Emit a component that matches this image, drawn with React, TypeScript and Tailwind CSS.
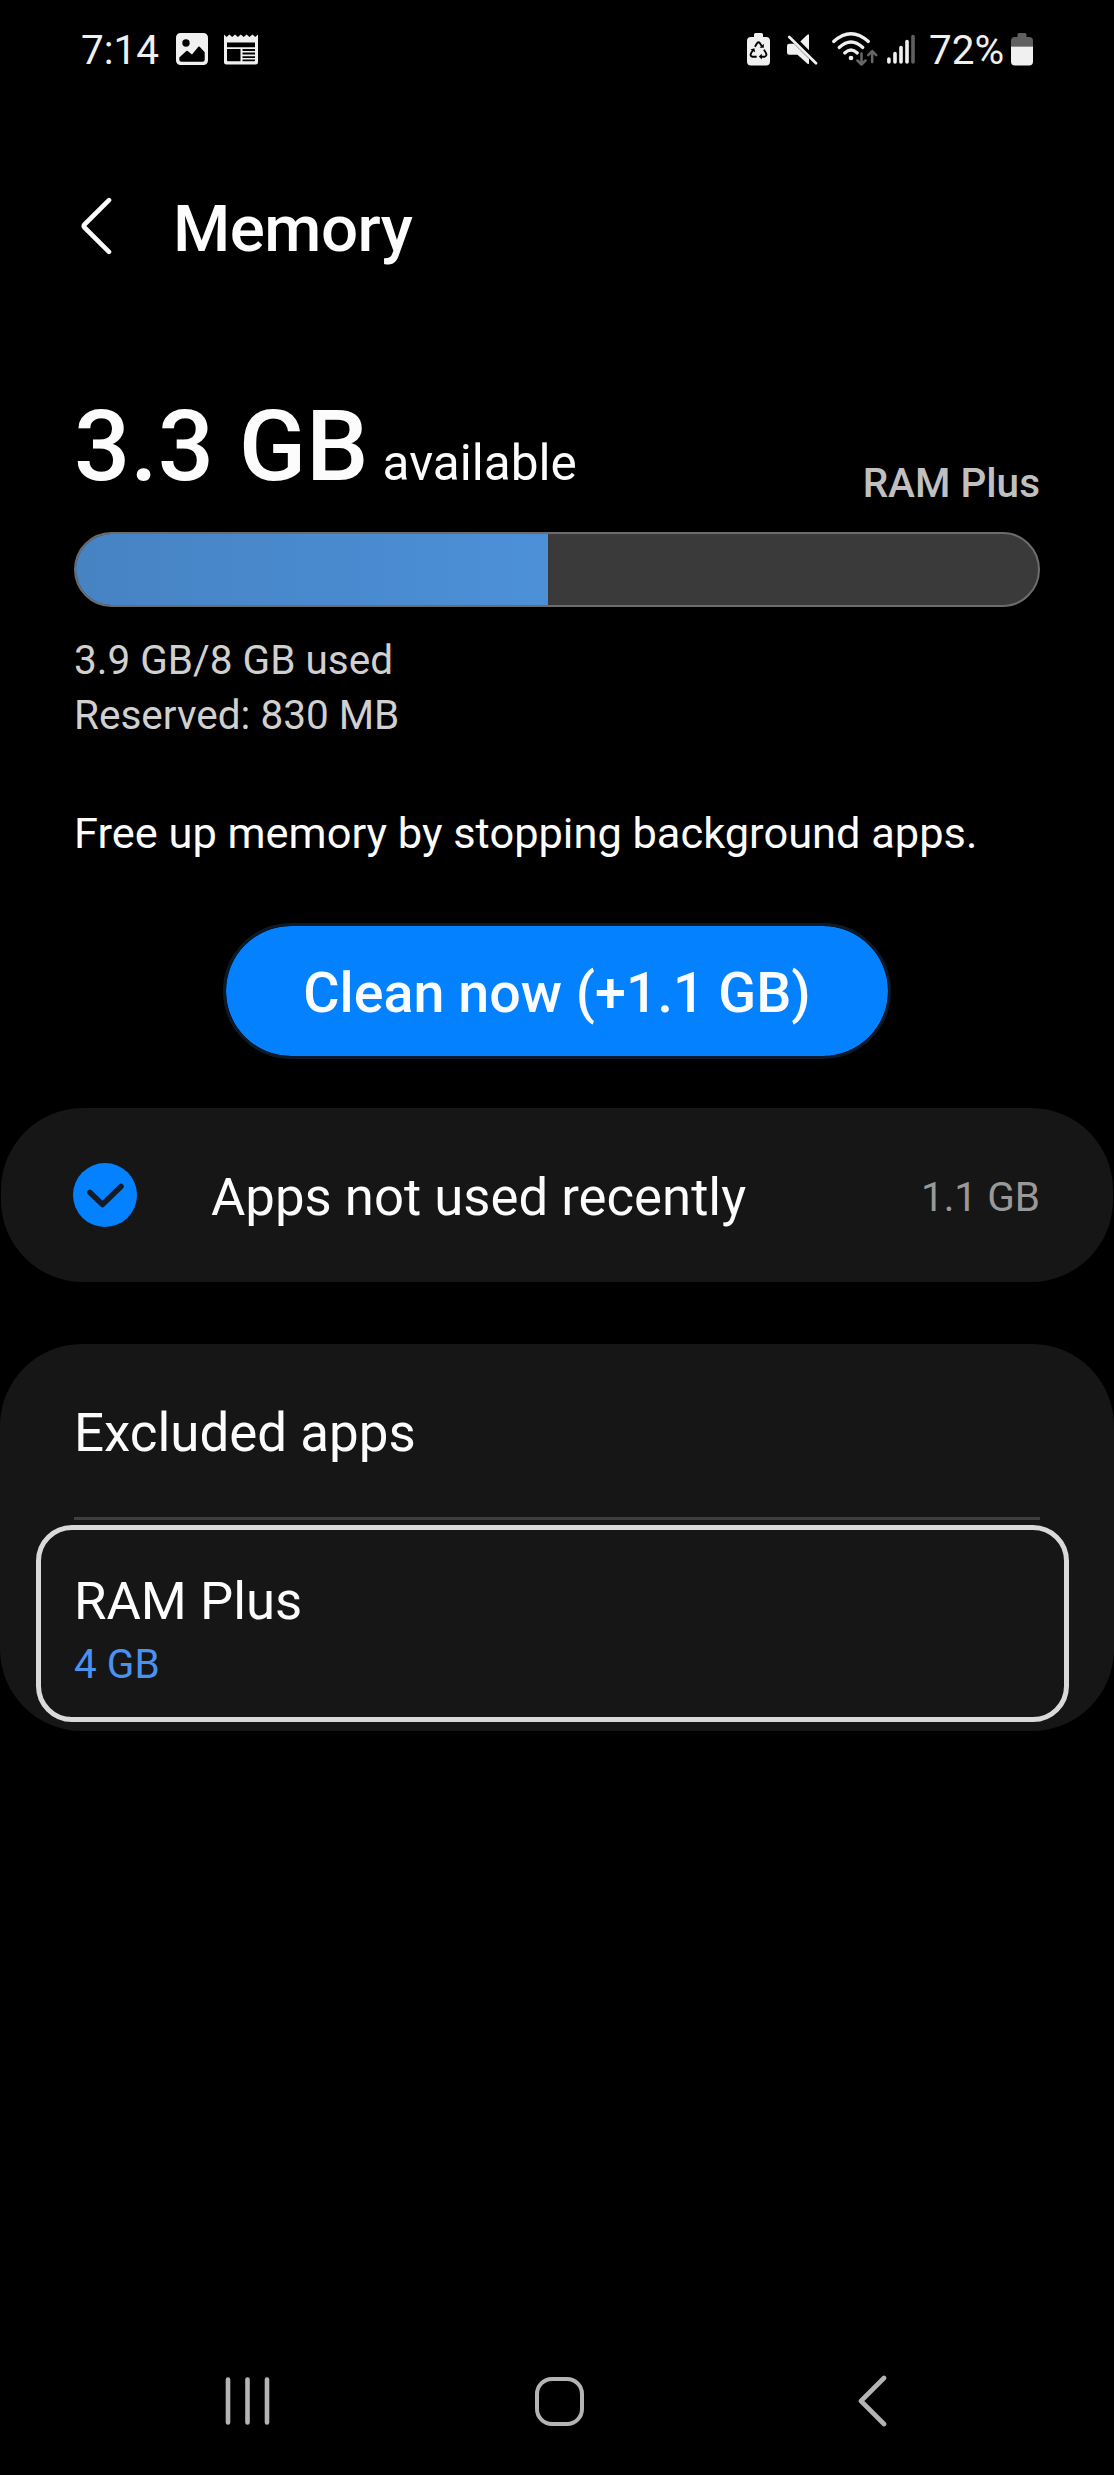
import React from "react";

function PictureIcon() {
  return (
    <svg width="32" height="32" viewBox="0 0 32 32">
      <path
        fill="#f0f0f0"
        fillRule="evenodd"
        d="M4.5 0h23A4.5 4.5 0 0 1 32 4.5v23a4.5 4.5 0 0 1-4.5 4.5h-23A4.5 4.5 0 0 1 0 27.500v-23A4.500 4.500 0 0 1 4.500 0ZM10 6.300a3.700 3.700 0 1 0 0 7.400a3.700 3.700 0 0 0 0-7.400ZM3.300 24.500v2.300q0 2 2 2h21.400q2 0 2-2V19.200l-5-5.400q-.7-.7-1.400 0l-6.300 7.600-4.300-3.500q-.7-.5-1.400.1Z"
      />
    </svg>
  );
}

function NewsIcon() {
  return (
    <svg width="34" height="31" viewBox="0 0 34 31">
      <path
        fill="#f0f0f0"
        fillRule="evenodd"
        d="M0 .5L2.600 3 5.400.5 8.200 3 11 .5 13.900 3 16.800.5 19.700 3 22.600.5 25.500 3 28.500.5 31.300 3 34 .5V28q0 2.500-2.500 2.500h-29Q0 30.500 0 28ZM3 8.500v4.700h28V8.500ZM3 15v11.500q0 .8.800.8H16.500V15ZM18.500 15v2H31v-2ZM18.500 18.600v2H31v-2ZM18.500 22.200v1.800H31v-1.800ZM18.500 25.600v1.700h11.700q.8 0 .8-.8v-.9Z"
      />
    </svg>
  );
}

function RecycleBatteryIcon() {
  return (
    <svg width="23" height="33" viewBox="0 0 23 33">
      <path fill="#f0f0f0" d="M7 1.500Q7 0 8.500 0h6Q16 0 16 1.500V4h3q4 0 4 4v20.500q0 4-4 4H4q-4 0-4-4V8q0-4 4-4h3Z" />
      <g fill="none" stroke="#000" strokeWidth="1.900">
        <path d="M7.900 13.700l2.300-3.600q1.300-1.600 2.600 0l2 3.200" />
        <path d="M17 16.600l2 3.500q1.200 3-1.500 3.600h-4" />
        <path d="M9.700 23.700H5.400q-2.800-.6-1.300-3.600l2-3.200" />
      </g>
      <path d="M16.800 10.800v4h-4.200ZM14.800 20.800v5.600l-3-2.800ZM3.400 16.500l4-1.200.8 3.900Z" />
    </svg>
  );
}

function MuteIcon() {
  return (
    <svg width="31" height="31" viewBox="0 0 31 31" fill="#f0f0f0">
      <path d="M22 .6V16.200L13.300 7.600 20.300.8Q22-.4 22 .6Z" />
      <path d="M0 12q0-2.300 2.300-2.300H7L22 24.700v4.500q0 1.400-1.500.6L10.500 20.800H2.300Q0 20.800 0 18.500Z" />
      <path d="M2.300 3L29 29.200" stroke="#f0f0f0" strokeWidth="2.700" strokeLinecap="round" />
    </svg>
  );
}

function WifiIcon() {
  return (
    <svg width="46" height="34" viewBox="0 0 46 34" fill="none">
      <g stroke="#f0f0f0" strokeWidth="3.200" strokeLinecap="round">
        <path d="M1.700 9.500Q19 -6 36.300 9.500" />
        <path d="M7.200 15.500Q19 4.500 30.800 15.500" />
        <path d="M12.700 21Q19 15 25.300 21" />
      </g>
      <circle cx="19" cy="26" r="2.300" fill="#f0f0f0" />
      <g stroke="#666" strokeWidth="2.500" strokeLinecap="round" strokeLinejoin="round">
        <path d="M29.500 21.500V32M25.500 28.500l4 4 4-4" />
        <path d="M40.200 30V19.500M36.200 23.200l4-4 4 4" />
      </g>
    </svg>
  );
}

function SignalIcon() {
  return (
    <svg width="28" height="31" viewBox="0 0 28 31" strokeWidth="3.600" strokeLinecap="round">
      <path stroke="#f0f0f0" d="M1.900 25v3M8 19.500V28M14 13.500V28M20 7.500V28" />
      <path stroke="#606060" d="M26 2.500V28" />
    </svg>
  );
}

function BatteryIcon() {
  return (
    <svg width="22" height="33" viewBox="0 0 22 33">
      <path fill="#606060" d="M6.500 1.500Q6.500 0 8 0h6q1.500 0 1.500 1.500V4H18q4 0 4 4v5.500H0V8q0-4 4-4h2.500Z" />
      <path fill="#f0f0f0" d="M0 13.500h22v15q0 4-4 4H4q-4 0-4-4Z" />
    </svg>
  );
}

function StatusBar() {
  return (
    <div className="flex h-[98px] shrink-0 items-center pl-[81px] pr-[81px] text-[40.500px] leading-none text-[#f0f0f0]">
      <span className="w-[95px] pt-[2px]">7:14</span>
      <PictureIcon />
      <div className="ml-4">
        <NewsIcon />
      </div>
      <div className="ml-auto flex items-center">
        <RecycleBatteryIcon />
        <div className="ml-[17px]">
          <MuteIcon />
        </div>
        <div className="ml-[14px]">
          <WifiIcon />
        </div>
        <div className="ml-[9px]">
          <SignalIcon />
        </div>
        <span className="ml-[14px] w-[82px] whitespace-nowrap pt-[2px]">72%</span>
        <BatteryIcon />
      </div>
    </div>
  );
}

function Header() {
  return (
    <header className="flex h-[260px] shrink-0 items-center pl-[80px]">
      <svg className="mb-[5px]" width="32" height="58" viewBox="0 0 32 58" fill="none" stroke="#fcfcfc" strokeWidth="4.600" strokeLinecap="round" strokeLinejoin="round">
        <path d="M29 3.200L4.500 27.500q-1.500 1.500 0 3L29 54.800" />
      </svg>
      <h1 className="ml-[61px] pt-[2px] text-[65.500px] font-medium leading-none tracking-[-0.5px] text-[#fcfcfc]">Memory</h1>
    </header>
  );
}

function MemoryUsage() {
  return (
    <section className="flex flex-col px-[74px]">
      <div className="flex h-[174px] items-end justify-between">
        <div className="mb-[19px] flex items-baseline whitespace-nowrap leading-[100px] text-[#fcfcfc]">
          <span className="text-[99px] font-medium">3.3 GB</span>
          <span className="ml-[14px] text-[49.500px]">available</span>
        </div>
        <span className="mb-[24px] text-[40.500px] font-medium leading-[50px] text-[#c0c0c0]">RAM Plus</span>
      </div>
      <div className="h-[75px] overflow-hidden rounded-full border-2 border-[#6c6c6c] bg-[#3a3a3a]">
        <div className="h-full w-[472px] bg-linear-to-r from-[#4683c3] to-[#4c90d8]" />
      </div>
      <p className="mt-[26px] text-[40.500px] leading-[55px] text-[#d0d0d0]">
        3.9 GB/8 GB used
        <br />
        Reserved: 830 MB
      </p>
      <p className="mt-[61px] whitespace-nowrap text-[43.400px] leading-[60px] text-[#fcfcfc]">
        Free up memory by stopping background apps.
      </p>
      <button className="mt-[59px] flex h-[136px] w-[668px] items-center justify-center self-center whitespace-nowrap rounded-full border-[3px] border-[#0c1a28] bg-[#0481ff] bg-clip-padding pt-[6px] text-[55.600px] font-medium leading-none text-[#fafcff]">
        Clean now (+1.1 GB)
      </button>
    </section>
  );
}

function UnusedAppsCard() {
  return (
    <section className="mx-px mt-[49px] flex h-[174px] shrink-0 items-center rounded-[82px] bg-[#161616] pl-[72px] pr-[73px]">
      <svg width="64" height="64" viewBox="0 0 64 64">
        <circle cx="32" cy="32" r="32" fill="#0481ff" />
        <path d="M17 29.500L29.500 41.500L48 23.500" fill="none" stroke="#151b24" strokeWidth="5.500" strokeLinecap="round" strokeLinejoin="round" />
      </svg>
      <span className="ml-[74px] pt-[5px] text-[52.700px] leading-none text-[#fcfcfc]">Apps not used recently</span>
      <span className="ml-auto pt-[4px] text-[40.500px] leading-none text-[#999]">1.1 GB</span>
    </section>
  );
}

function SettingsCard() {
  return (
    <section className="mt-[62px] flex h-[387px] shrink-0 flex-col rounded-[82px] bg-[#161616]">
      <div className="flex h-[173px] items-center pl-[74px] pt-[5px] text-[52.900px] leading-none text-[#fcfcfc]">Excluded apps</div>
      <div className="mx-[74px] h-[3px] shrink-0 bg-[#3f3f3f]" />
      <div className="ml-[36px] mt-[5px] flex h-[197px] w-[1033px] flex-col rounded-[36px] border-[5px] border-[#dadada] pl-[33px] pt-[41px]">
        <span className="text-[52.700px] leading-[60px] text-[#fcfcfc]">RAM Plus</span>
        <span className="mt-[6px] text-[40.500px] leading-[54px] text-[#4a92f0]">4 GB</span>
      </div>
    </section>
  );
}

function NavigationBar() {
  return (
    <nav className="mt-auto flex h-[148px] shrink-0 items-center pl-[225px] text-[#b4b4b4]">
      <svg width="45" height="50" viewBox="0 0 45 50" stroke="currentColor" strokeWidth="4.600" strokeLinecap="round">
        <path d="M3 3.500V46.500M22.500 3.500V46.500M42 3.500V46.500" />
      </svg>
      <div className="ml-[265px] size-[49px] rounded-[17px] border-[4.500px] border-current" />
      <svg className="ml-[273px]" width="32" height="52" viewBox="0 0 32 52" fill="none" stroke="currentColor" strokeWidth="4.600" strokeLinecap="round" strokeLinejoin="round">
        <path d="M27 3L4 26L27 49" />
      </svg>
    </nav>
  );
}

export default function App() {
  return (
    <main className="flex h-[2475px] w-[1114px] flex-col overflow-hidden bg-black font-['Roboto',sans-serif]">
      <StatusBar />
      <Header />
      <MemoryUsage />
      <UnusedAppsCard />
      <SettingsCard />
      <NavigationBar />
    </main>
  );
}
